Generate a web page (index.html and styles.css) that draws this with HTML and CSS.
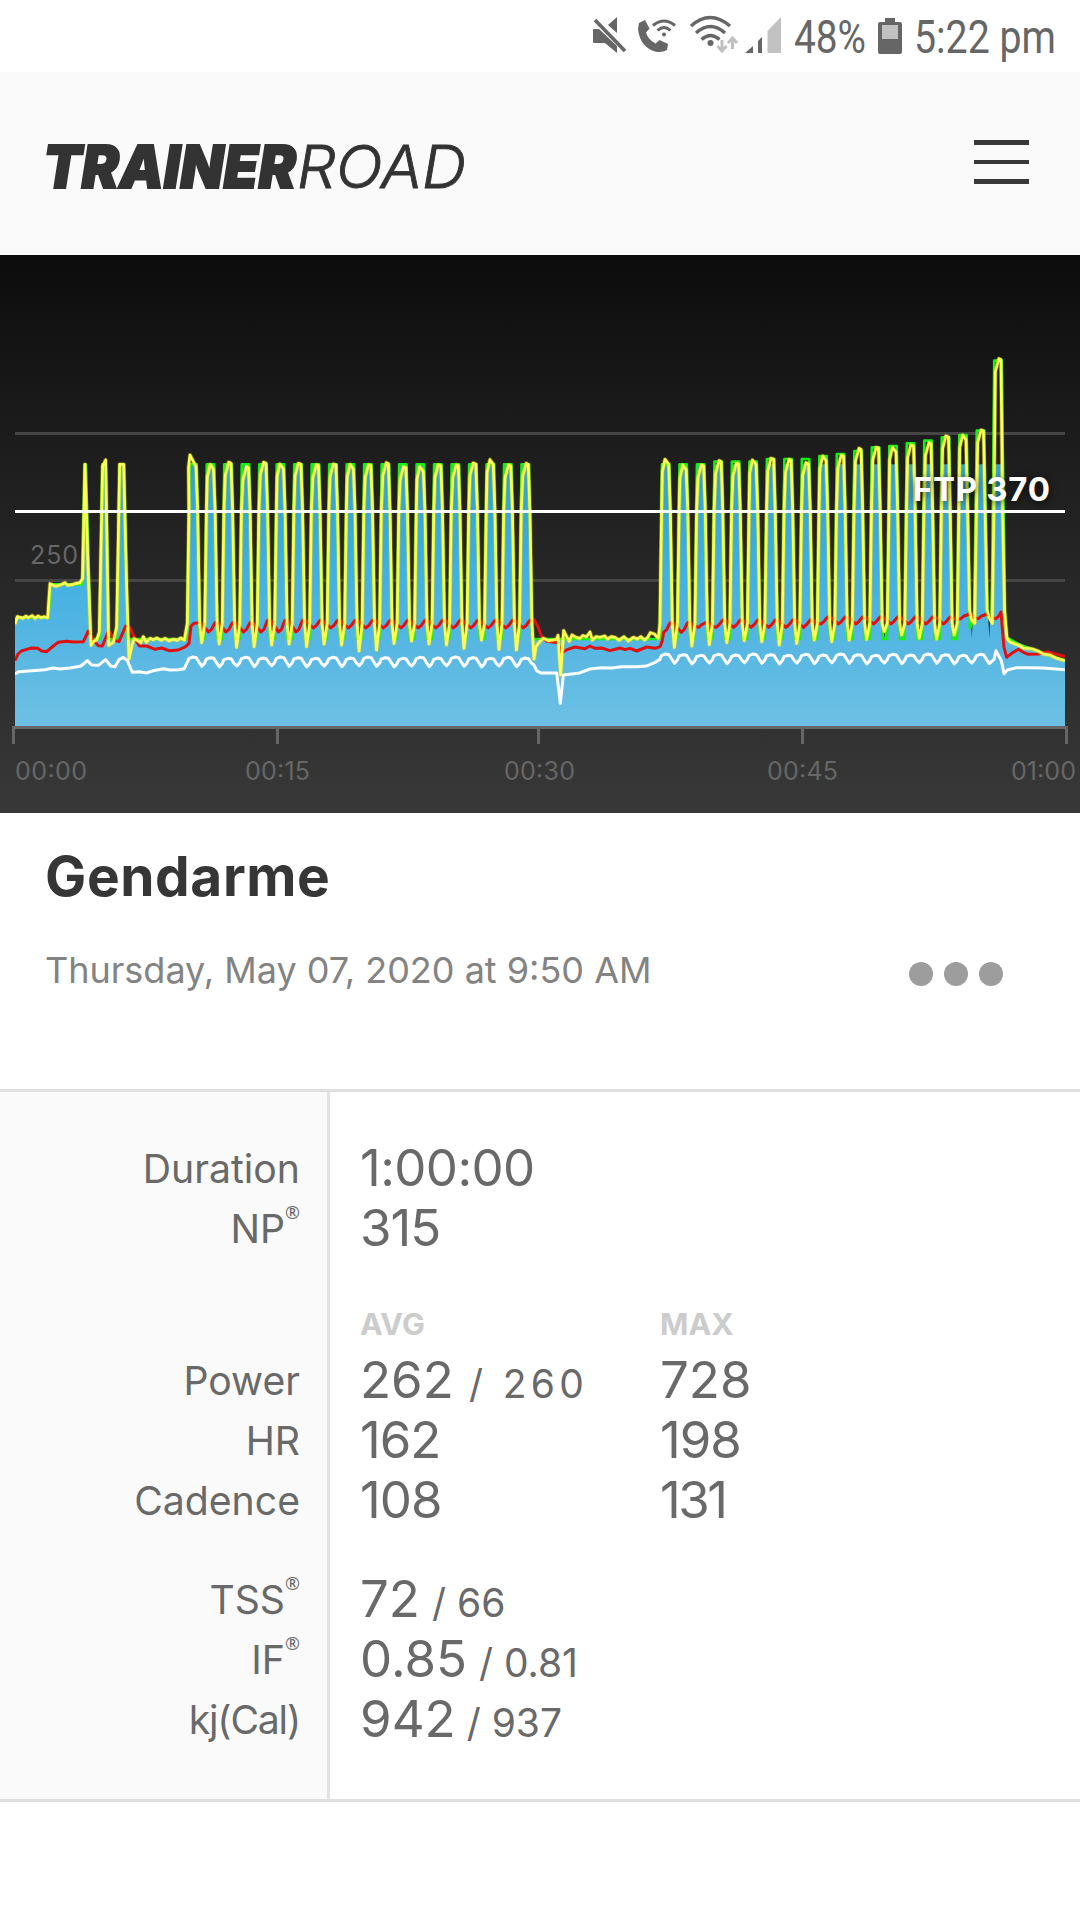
FILE: index.html
```html
<!DOCTYPE html>
<html lang="en">
<head>
<meta charset="utf-8">
<title>Gendarme - TrainerRoad</title>
<link rel="stylesheet" href="styles.css">
</head>
<body>
<div class="status">
  <svg class="mute" width="34" height="38" viewBox="0 0 34 38"><path d="M24 0v16L15 8zM1 12h5l18 17v7L12 26H1a1 1 0 0 1-1-1V13a1 1 0 0 1 1-1z"/><path d="M2 3l30 31" fill="none" stroke="#666" stroke-width="3.6"/></svg>
  <svg class="call" width="39" height="36" viewBox="0 0 39 36"><path d="M1 5l6-3 4.500 8.500-3.500 4q2 7 9.500 11l4-3.500 8.500 4-1 6q-5 3-12 1.500Q2 29 0 11z"/><g fill="none" stroke="#666" stroke-width="3"><path d="M15 7.500q11-9 22 0M19.500 12.500q6.500-6 13 0"/></g><circle cx="26" cy="16.500" r="2"/></svg>
  <svg class="wifi" width="48" height="38" viewBox="0 0 48 38"><g fill="none" stroke="#666" stroke-width="3.4"><path d="M1 10q19-17 39 0M6 17q14.500-13 29 0M11.500 23.500q9-8 18 0"/></g><circle cx="20.500" cy="27" r="3"/><g fill="none" stroke="#c0c0c0" stroke-width="3"><path d="M32 24v10M27.500 30l4.500 5 4.500-5M42.500 33V22M38 27l4.500-5 4.500 5"/></g></svg>
  <svg class="signal" width="36" height="36" viewBox="0 0 36 36"><path d="M0 36l8-7v7zM13 24l4-4v16h-4z"/><path d="M22.500 14L36 0v36H22.500z" fill="#c2c2c2"/></svg>
  <svg class="percent" width="72" height="56" viewBox="0 0 72 56"><text x="-1" y="40" textLength="72" lengthAdjust="spacingAndGlyphs">48%</text></svg>
  <svg class="battery" width="24" height="36" viewBox="0 0 24 36"><path d="M7 0h10v4h5a2 2 0 0 1 2 2v28a2 2 0 0 1-2 2H2a2 2 0 0 1-2-2V6a2 2 0 0 1 2-2h5z"/><path d="M4 7h16v14H4z" fill="#c2c2c2"/></svg>
  <svg class="clock" width="142" height="64" viewBox="0 0 142 64"><text x="-2" y="47" textLength="142" lengthAdjust="spacingAndGlyphs">5:22 pm</text></svg>
</div>
<header class="header">
  <svg class="logo" width="424" height="48" viewBox="0 0 424 48"><text class="logo-heavy" x="-2" y="45" textLength="253" lengthAdjust="spacingAndGlyphs">TRAINER</text><text class="logo-light" x="252" y="45" textLength="169" lengthAdjust="spacingAndGlyphs">ROAD</text></svg>
  <div class="menu"><span></span><span></span><span></span></div>
</header>
<svg class="chart" id="chart" width="1080" height="558" viewBox="0 0 1080 558">
  <defs>
    <linearGradient id="sky" gradientUnits="userSpaceOnUse" x1="0" y1="130" x2="0" y2="918"><stop offset="0" stop-color="#2f9fd0"/><stop offset=".4" stop-color="#40b0e2"/><stop offset=".7" stop-color="#57b7e2"/><stop offset="1" stop-color="#6dc0e4"/></linearGradient>
    <clipPath id="plot"><rect x="45" y="-400" width="3150" height="1400"/></clipPath>
  </defs>
  <path class="grid" d="M15 178.500H1065M15 325.500H1065"/>
  <text class="axis-label" x="30" y="309" textLength="48">250</text>
  <g transform="translate(0 165) scale(.333333)" clip-path="url(#plot)">
    <path id="area" fill="url(#sky)"/>
    <path id="target" class="line target"/>
    <path id="heart" class="line heart"/>
    <path id="glow" class="line glow"/>
    <path id="power" class="line power"/>
    <path id="cadence" class="line cadence"/>
  </g>
  <path class="ftp-line" d="M15 256.500H1065"/>
  <path class="axis" d="M13.500 489V472.500H1066.500V489M277.500 472V489M538.500 472V489M802.500 472V489"/>
  <text class="axis-label" x="15" y="525" textLength="72">00:00</text>
  <text class="axis-label" x="245" y="525" textLength="65">00:15</text>
  <text class="axis-label" x="504" y="525" textLength="71">00:30</text>
  <text class="axis-label" x="767" y="525" textLength="71">00:45</text>
  <text class="axis-label" x="1011" y="525" textLength="65">01:00</text>
  <text class="ftp" x="913" y="246" textLength="137">FTP 370</text>
</svg>
<section class="intro">
  <h1>Gendarme</h1>
  <div class="meta"><p>Thursday, May 07, 2020 at 9:50 AM</p><div class="dots"><i></i><i></i><i></i></div></div>
</section>
<section class="stats">
  <div class="labels">
    <div>Duration</div><div>NP<sup>®</sup></div>
    <div class="after-head">Power</div><div>HR</div><div>Cadence</div>
    <div class="after-gap">TSS<sup>®</sup></div><div>IF<sup>®</sup></div><div class="kj">kj(Cal)</div>
  </div>
  <div class="values">
    <div class="row duration">1:00:00</div><div class="row tight">315</div>
    <div class="row head"><b class="avg">AVG</b><b>MAX</b></div>
    <div class="row"><span class="avg">262<small class="wide"> / 260</small></span><span>728</span></div>
    <div class="row tight"><span class="avg">162</span><span>198</span></div>
    <div class="row tight"><span class="avg">108</span><span class="narrow">131</span></div>
    <div class="row after-gap">72<small class="goal">&nbsp;/ 66</small></div>
    <div class="row">0.85<small class="goal">&nbsp;/ 0.81</small></div>
    <div class="row">942<small>&nbsp;/ 937</small></div>
  </div>
</section>
<script src="chart.js"></script>
</body>
</html>
```
FILE: styles.css
```css
* { box-sizing: border-box; }
body { margin: 0; width: 1080px; height: 1920px; background: #fff; color: #696969; font-family: Inter, "Liberation Sans", sans-serif; overflow: hidden; }
svg { display: block; flex: none; }
h1, p { margin: 0; }

.status { height: 72px; display: flex; align-items: flex-start; padding-left: 593px; }
.status svg { fill: #666; overflow: visible; }
.status text { font: 45.500px Roboto, sans-serif; }
.mute { margin-top: 17px; }
.call { margin: 18px 0 0 11px; }
.wifi { margin: 16px 0 0 13px; }
.signal { margin: 17px 0 0 7px; }
.percent { margin: 13px 0 0 14px; }
.battery { margin: 18px 0 0 11px; }
.clock { margin: 6px 0 0 14px; }

.header { height: 183px; padding: 0 51px 0 45px; background: #fafafa; display: flex; justify-content: space-between; align-items: flex-start; }
.logo { margin-top: 71px; overflow: visible; fill: #333; stroke: #333; }
.logo-heavy { font: italic 900 58.500px Inter, sans-serif; stroke-width: 1.8px; }
.logo-light { font: italic 300 59.500px Inter, sans-serif; stroke-width: .9px; }
.menu { margin-top: 68px; width: 55px; display: flex; flex-direction: column; gap: 15px; }
.menu span { height: 4.500px; background: #383838; }

.chart { background: linear-gradient(#0c0c0c, #1b1b1b 30%, #383838); }
.grid { stroke: #464646; stroke-width: 3; }
.axis { fill: none; stroke: #666; stroke-width: 3; }
.axis-label { font: 25px Inter, sans-serif; fill: #666; }
.ftp-line { stroke: #fff; stroke-width: 3; }
.ftp { font: 700 33px Inter, sans-serif; fill: #fff; text-shadow: 0 2px 8px rgba(0, 0, 0, .7); }
.line { fill: none; stroke-linejoin: round; stroke-width: 8; }
.target { stroke: #14f014; }
.heart { stroke: #e01010; stroke-width: 9; }
.glow { stroke: #ffe600; stroke-width: 13; opacity: .35; }
.power { stroke: #fdfd58; }
.cadence { stroke: #fff; stroke-width: 9; }

.intro { height: 276px; padding: 30px 77px 0 45px; }
h1 { font-size: 55px; font-weight: 700; line-height: 66px; letter-spacing: .6px; color: #363636; }
.meta { margin-top: 39px; display: flex; justify-content: space-between; align-items: center; }
.meta p { font-size: 36px; line-height: 44px; color: #838383; white-space: nowrap; }
.dots { display: flex; gap: 11px; margin-top: 7px; }
.dots i { width: 24px; height: 24px; border-radius: 50%; background: #9d9d9d; }

.stats { height: 713px; border: solid #dfdfdf; border-width: 3px 0; display: flex; }
.labels { width: 330px; padding: 47px 27px 0 0; border-right: 3px solid #e3e3e3; background: #fafafa; text-align: right; font-size: 39.200px; line-height: 60px; }
.labels div { height: 60px; }
.labels sup { font: 18px/0 "Noto Sans", sans-serif; vertical-align: 24px; }
.labels .after-head { margin-top: 92px; }
.labels .after-gap, .values .after-gap { margin-top: 39px; }
.kj { letter-spacing: -1.200px; }
.values { flex: 1; padding: 46px 0 0 30px; font-size: 51px; }
.row { height: 60px; line-height: 60px; display: flex; align-items: baseline; white-space: pre; }
.duration { letter-spacing: -.6px; }
.tight { letter-spacing: -1px; }
.narrow { letter-spacing: -2.500px; }
.avg { width: 300px; }
.values small { font-size: 39px; }
.values .wide { letter-spacing: 4.300px; }
.goal { margin-left: 1px; }
.values .head { height: 92px; padding-top: 20px; line-height: 92px; font-size: 30.500px; color: #ccc; }
```
FILE: chart.js
```js
// Horizontal units are thirds of a pixel; intervals repeat every 52.5 units.
const STEP = 52.46;
const set1 = {
  start: 579, tops: [105,133,127,140,127,132,130,134,132,133,134,128,140,140,134,134,129,119,135,130],
  goal: Array(20).fill(133),
  dips: [668,672,682,680,675,672,680,672,675,693,690,670,663,672,675,685,660,688,690]
};
const set2 = {
  start: 1997, tops: [118,135,135,122,130,120,115,118,128,108,106,85,82,82,75,68,48,45,30,-184],
  goal: [133,133,133,125,125,125,117,117,117,108,102,93,82,78,70,62,52,45,32,-178],
  dips: [682,678,674,668,662,665,675,670,660,665,660,658,635,645,655,657,645,600,592]
};
const area = [[45,600],[52,592],[145,592],[152,493],[246,493],[254,133],[257,133],[272,657],[298,657],[307,133],[317,133],[326,657],[350,657],[359,133],[372,133],[383,657]];
const target = area.slice();
const power = [[45,612],[52,590],[60,592],[68,595],[78,588],[85,593],[97,587],[105,595],[114,588],[123,593],[132,590],[143,593],[150,491],[158,495],[168,499],[182,494],[195,488],[203,496],[215,494],[225,491],[240,488],[248,475],[255,133],[264,440],[273,676],[281,664],[290,660],[298,636],[308,138],[317,120],[326,676],[340,667],[350,620],[359,133],[371,133],[380,500],[387,717],[395,680],[402,656],[413,662],[422,668],[430,650],[439,667],[450,655],[460,659],[470,654],[484,661],[495,655],[507,663],[520,658],[532,661],[542,654],[553,660]];
const heart = [[45,722],[54,702],[64,693],[80,688],[95,684],[113,685],[125,693],[140,695],[160,678],[175,667],[200,664],[220,666],[250,665],[265,633],[280,660],[295,677],[307,678],[326,632],[345,662],[357,665],[377,618],[390,622],[402,650],[418,678],[440,678],[465,688],[485,684],[507,692],[535,690],[557,680],[567,670]];
const cadence = [[45,762],[57,755],[95,752],[135,749],[158,744],[180,747],[210,744],[243,738],[262,722],[275,735],[295,736],[317,719],[332,738],[345,740],[358,718],[370,712],[382,722],[397,757],[418,755],[440,759],[460,752],[490,746],[510,750],[535,749],[553,746]];

function intervals(set, redHigh, redLow, white, last) {
  set.tops.forEach((top, i) => {
    const c = set.start + i * STEP, goal = set.goal[i];
    // The closing valleys are sharper than the rest of the set.
    const left = last && i > 17 ? 23 : 18, right = last && i > 16 ? 23 : 21;
    if (!i) area.push([c-20,657]);
    area.push([c-left,590],[c-12,133],[c+11,133],[c+right,590],[c+27,655]);
    const floor = last && i > 16 ? 625 : 657;
    target.push([c-18,last && i > 17 ? 590 : 657],[c-11,goal],[c+11,goal],[c+21,i > 17 && last ? 590 : floor]);
    const lag = i ? [3,1,4,5,4,0,3,5][i % 8] : last ? 0 : -7;
    power.push([c-17,610],[c-12,270],[c-10+lag/2,top+38],[c-2+lag,top],[c+9,top+(lag < 0 ? 35 : lag < 2 ? 14 : 3)],[c+14,270],[c+20,last && i > 16 ? 570 : 610]);
    if (set.dips[i]) power.push([c+26,set.dips[i]]);
    heart.push([c-6,redLow(i)],[c+3,redLow(i)-8],[c+13,redHigh(i)+4],[c+19,redHigh(i)],[c+30,redHigh(i)+11]);
    const w = white + (i * 7 % 5) - 2;
    if (i) cadence.push([c-26,w+26]);
    cadence.push([c-18,w+17],[c-12,w+4],[c,w],[c+10,w+2],[c+18,w+15]);
  });
}
intervals(set1, i => i < 4 ? 605 : 598, i => i ? (i < 7 ? 636 : 624) : 618, 713, false);
area.push([1605,657],[1978,657]);
target.push([1605,657],[1978,657]);
heart.pop();
power.push([1602,717],[1608,680],[1620,664],[1630,655],[1645,662],[1660,660],[1670,658],[1674,646],[1682,765],[1691,632],[1700,650],[1708,664],[1716,645],[1728,652],[1740,655],[1748,647],[1760,650],[1770,636],[1777,660],[1788,650],[1800,652],[1814,648],[1822,657],[1834,650],[1847,653],[1857,661],[1872,650],[1885,663],[1900,652],[1912,657],[1923,650],[1934,660],[1944,651],[1951,638],[1963,642],[1975,655]);
heart.push([1603,600],[1613,618],[1625,650],[1640,664],[1674,668],[1684,702],[1695,692],[1710,686],[1725,681],[1755,686],[1770,678],[1785,685],[1805,684],[1830,692],[1860,684],[1875,689],[1890,685],[1910,693],[1940,681],[1965,685],[1980,680],[1986,665]);
cadence.push([1602,735],[1610,752],[1622,759],[1670,759],[1681,850],[1690,765],[1715,762],[1735,760],[1770,747],[1805,743],[1835,744],[1865,740],[1910,740],[1940,738],[1965,727]);
intervals(set2, i => i < 3 ? 605 : i < 9 ? 597 : i < 17 ? 588 : 581, i => i < 2 ? 637 : i < 9 ? 622 : i < 17 ? 612 : 596, 704, true);
heart.splice(-3);
area.push([3195,722]);
target.push([3020,652],[3060,675],[3195,722]);
power.push([3021,655],[3030,666],[3045,672],[3060,677],[3070,684],[3098,687],[3112,692],[3130,702],[3150,705],[3170,715],[3195,722]);
heart.push([3003,576],[3006,615],[3012,682],[3020,712],[3035,700],[3055,688],[3070,697],[3085,703],[3115,702],[3140,695],[3160,700],[3195,710]);
cadence.splice(-5);
cadence.push([2982,718],[2988,692],[2995,706],[3004,722],[3012,761],[3022,750],[3050,743],[3080,743],[3130,744],[3195,749]);

const path = pts => 'M' + pts.map(p => p.join(' ')).join('L');
const draw = (id, d) => document.getElementById(id).setAttribute('d', d);
draw('area', path(area) + 'V918H45Z');
draw('target', path(target));
draw('heart', path(heart));
draw('glow', path(power));
draw('power', path(power));
draw('cadence', path(cadence));
```
